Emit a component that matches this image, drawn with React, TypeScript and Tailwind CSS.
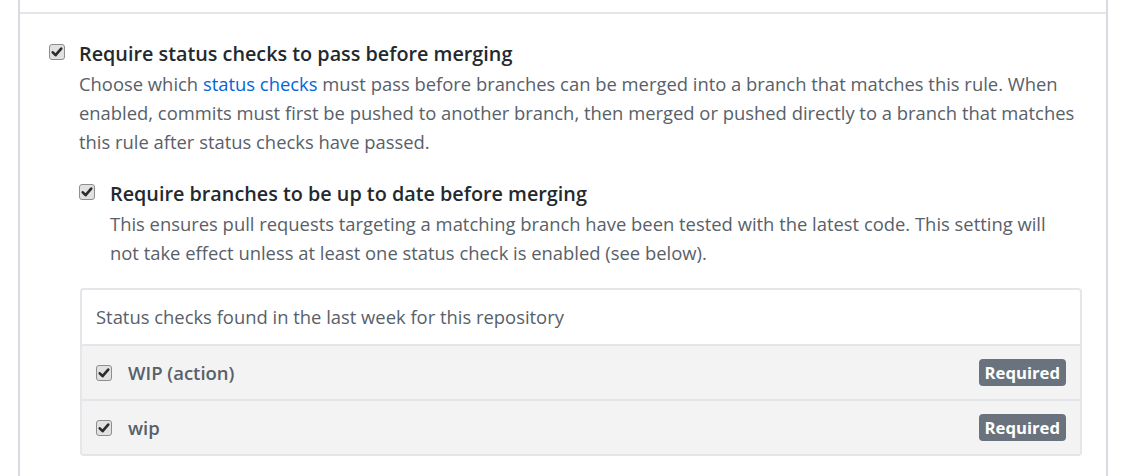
import React from 'react'

function Check() {
  return (
    <span className="flex h-4 w-4 shrink-0 items-center justify-center rounded-[3px] border border-[#8e8e8e] bg-[#e1e1e1]">
      <svg viewBox="0 0 12 12" className="h-3 w-3">
        <path d="M1.8 6.3 L4.6 9.2 L10.2 2.6" fill="none" stroke="#2b2b2b" strokeWidth="2.6" strokeLinecap="round" strokeLinejoin="round" />
      </svg>
    </span>
  )
}

const checks = ['WIP (action)', 'wip']

export default function App() {
  return (
    <div className="h-[476px] overflow-hidden bg-white" style={{ fontFamily: '"Open Sans", "Noto Sans", sans-serif' }}>
      <div className="ml-[18px] h-full w-[1090px] border-x-2 border-[#d8dbdf]">
        <div className="h-3" />
        <div className="border-t-2 border-[#e4e6e9] pl-[29px] pr-[22px] pt-[25px]">
          <div className="flex items-start gap-[14px]">
            <span className="mt-[5px]">
              <Check />
            </span>
            <div className="flex-1">
              <div className="text-[19.8px] font-semibold leading-[30px] text-[#24292e] whitespace-nowrap">
                Require status checks to pass before merging
              </div>
              <p className="text-[18.4px] leading-[29px] text-[#586069] whitespace-nowrap">
                Choose which <span className="text-[#0366d6]">status checks</span> must pass before branches can be merged into a branch that matches this rule. When
                <br />
                enabled, commits must first be pushed to another branch, then merged or pushed directly to a branch that matches
                <br />
                this rule after status checks have passed.
              </p>

              <div className="mt-[23px] flex items-start gap-[15px]">
                <span className="mt-[5px]">
                  <Check />
                </span>
                <div>
                  <div className="text-[19.8px] font-semibold leading-[30px] text-[#24292e] whitespace-nowrap">
                    Require branches to be up to date before merging
                  </div>
                  <p className="text-[18.4px] leading-[29px] text-[#586069] whitespace-nowrap">
                    This ensures pull requests targeting a matching branch have been tested with the latest code. This setting will
                    <br />
                    not take effect unless at least one status check is enabled (see below).
                  </p>
                </div>
              </div>

              <div className="mt-[21px] ml-px w-[1002px] overflow-hidden rounded-[4px] border-2 border-[#e4e6e9]">
                <div className="flex h-[54px] items-center px-[14px] text-[18.4px] text-[#586069]">
                  Status checks found in the last week for this repository
                </div>
                {checks.map((name) => (
                  <div key={name} className="flex h-[55px] items-center border-t-2 border-[#e4e6e9] bg-[#f3f3f3] pl-[14px] pr-[14px]">
                    <Check />
                    <span className="ml-4 text-[18.5px] font-semibold text-[#586069]">{name}</span>
                    <span className="ml-auto rounded-[4px] bg-[#6a737d] px-[6px] text-[16.7px] font-bold leading-[27px] text-white">
                      Required
                    </span>
                  </div>
                ))}
              </div>
            </div>
          </div>
        </div>
      </div>
    </div>
  )
}
